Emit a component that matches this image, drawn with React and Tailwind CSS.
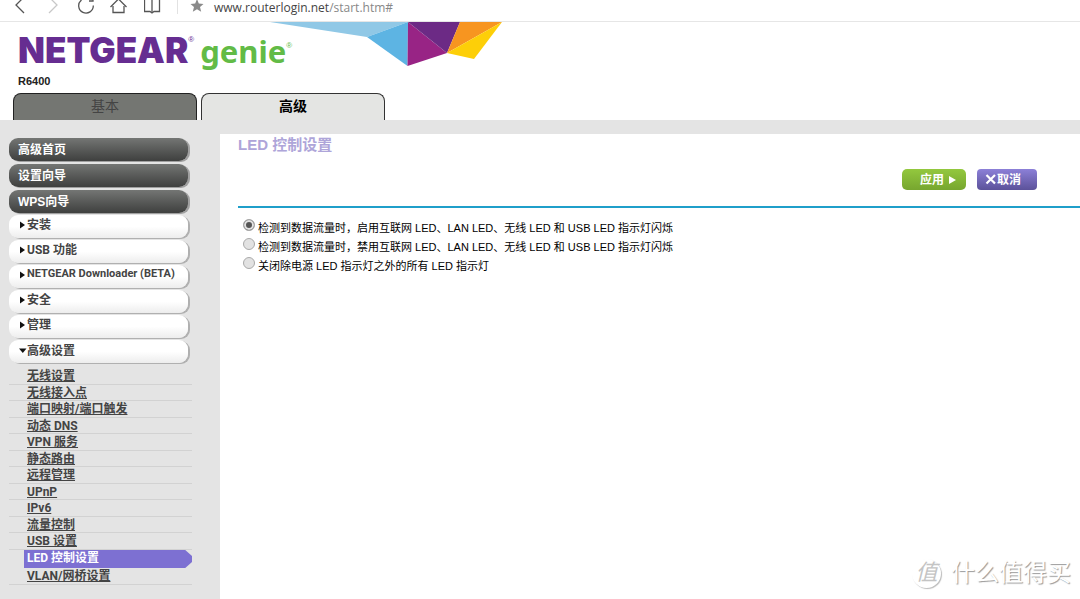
import React, { useState } from 'react';

const wizardItems = ['高级首页', '设置向导', 'WPS向导'];

const groups = [
  { label: '安装' },
  { label: 'USB 功能' },
  { label: 'NETGEAR Downloader (BETA)', small: true },
  { label: '安全' },
  { label: '管理' },
  { label: '高级设置', open: true }
];

const advancedItems = [
  '无线设置',
  '无线接入点',
  '端口映射/端口触发',
  '动态 DNS',
  'VPN 服务',
  '静态路由',
  '远程管理',
  'UPnP',
  'IPv6',
  '流量控制',
  'USB 设置',
  'LED 控制设置',
  'VLAN/网桥设置'
];

const ledOptions = [
  '检测到数据流量时，启用互联网 LED、LAN LED、无线 LED 和 USB LED 指示灯闪烁',
  '检测到数据流量时，禁用互联网 LED、LAN LED、无线 LED 和 USB LED 指示灯闪烁',
  '关闭除电源 LED 指示灯之外的所有 LED 指示灯'
];

const BrowserBar = () => (
  <div className="flex h-[22px] items-start border-b border-[#e6e6e6] bg-white pl-3 text-[#555]">
    <button type="button" aria-label="Back" className="mr-4">
      <svg width="16" height="16" viewBox="0 0 16 16" fill="none" stroke="currentColor" strokeWidth="1.3">
        <path d="M12 -3L4 5L12 13" />
      </svg>
    </button>
    <button type="button" aria-label="Forward" className="mr-4 text-[#c8c8c8]">
      <svg width="16" height="16" viewBox="0 0 16 16" fill="none" stroke="currentColor" strokeWidth="1.3">
        <path d="M5 -3L13 5L5 13" />
      </svg>
    </button>
    <button type="button" aria-label="Reload" className="mr-[14px]">
      <svg width="20" height="16" viewBox="0 0 20 16" fill="none" stroke="currentColor" strokeWidth="1.3">
        <path d="M5.500 0A7.300 7.300 0 1 0 17.300 5.500" />
        <path d="M13 1H17V-3" />
      </svg>
    </button>
    <button type="button" aria-label="Home" className="mr-4">
      <svg width="18" height="16" viewBox="0 0 18 16" fill="none" stroke="currentColor" strokeWidth="1.3">
        <path d="M0.500 7L8.500 -1L16.500 7" />
        <path d="M3 6V12.500H14V6" />
      </svg>
    </button>
    <button type="button" aria-label="Favorites" className="mr-4">
      <svg width="17" height="16" viewBox="0 0 17 16" fill="none" stroke="currentColor" strokeWidth="1.3">
        <path d="M0.500 -2V11.500H6L8 13L10 11.500H15.500V-2" />
        <path d="M8 0V12" />
      </svg>
    </button>
    <div className="mr-3 h-[14px] w-px bg-[#e2e2e2]" />
    <svg width="16" height="14" viewBox="0 0 16 14" fill="#8a8a8a" className="mr-2">
      <path d="M7 -1L8.800 3.500L13.500 3.900L10 7L11.200 11.800L7 9.200L2.800 11.800L4 7L0.500 3.900L5.200 3.500Z" />
    </svg>
    <p className="font-['Open_Sans',sans-serif] text-xs leading-4 text-[#444]">
      www.routerlogin.net<span className="text-[#888]">/start.htm#</span>
    </p>
  </div>
);

const Banner = () => (
  <svg width="232" height="44" viewBox="0 0 232 44" className="absolute left-[270px] top-0">
    <polygon points="0,0 138,0 97,15" fill="#90c8e6" />
    <polygon points="138,0 97,15 137.500,44" fill="#5db4e3" />
    <polygon points="138,0 177,31 137.500,44" fill="#982485" />
    <polygon points="138,0 190,0 177,31" fill="#6c2a85" />
    <polygon points="190,0 232,0 177,31" fill="#f79520" />
    <polygon points="232,0 177,31 204,37" fill="#fdcf08" />
  </svg>
);

const Header = () => (
  <header className="relative bg-white pl-[18px]">
    <Banner />
    <div className="relative flex h-[51px] items-baseline pt-2 leading-[40px]">
      <span className="font-['Inter',sans-serif] text-[35px] font-black text-[#662d91]">NETGEAR</span>
      <sup className="self-start text-[8px] leading-7 text-[#662d91]">®</sup>
      <span className="ml-[6px] font-['Noto_Sans',sans-serif] text-[31px] font-bold text-[#62bb46]">genie</span>
      <sup className="self-start text-[8px] leading-10 text-[#62bb46]">®</sup>
    </div>
    <p className="h-5 text-[11px] font-bold leading-4 text-[#222]">R6400</p>
    <nav className="-ml-[5px] flex gap-1 text-sm font-bold leading-6">
      <button type="button" className="h-[27px] w-[184px] rounded-t-lg border border-b-0 border-[#222] bg-[#747672] pb-[2px] font-normal text-[#444]">
        基本
      </button>
      <button type="button" className="h-[27px] w-[184px] rounded-t-lg border border-b-0 border-[#333] bg-[#e4e5e3] pb-[2px] text-black">
        高级
      </button>
    </nav>
  </header>
);

const Sidebar = ({ active, onSelect }) => (
  <aside className="w-[220px] shrink-0 pl-[9px] pt-[18px] text-xs font-bold text-[#444]">
    <div className="flex flex-col gap-[3px]">
      {wizardItems.map((item) => (
        <button
          key={item}
          type="button"
          className="h-[23px] w-[179px] rounded-[9px] bg-linear-to-b from-[#747674] to-[#3f403f] pl-[9px] text-left text-white shadow-[2px_1px_0_#a0a0a0]"
        >
          {item}
        </button>
      ))}
    </div>
    <div className="mt-[2px] flex flex-col gap-[2px]">
      {groups.map((group) => (
        <button
          key={group.label}
          type="button"
          className={`flex h-[23px] w-[179px] items-center rounded-[9px] bg-linear-to-b from-white from-50% to-[#ededed] pl-[10px] shadow-[2px_1px_0_#b0b0b0] ${
            group.open ? 'pb-[2px]' : 'pb-1'
          }`}
        >
          <svg width="8" height="8" viewBox="0 0 8 8" fill="#111">
            {group.open ? <path d="M0 1.500H7.500L3.800 6Z" /> : <path d="M1 0.500L6 4L1 7.500Z" />}
          </svg>
          <span className={`font-['Roboto','Noto_Sans_CJK_SC',sans-serif] ${group.small ? 'text-[11px]' : 'text-xs'}`}>
            {group.label}
          </span>
        </button>
      ))}
    </div>
    <ul className="w-[183px] pt-[5px] font-['Roboto','Noto_Sans_CJK_SC',sans-serif]">
      {advancedItems.map((item) =>
        item === active ? (
          <li key={item} className="pl-[15px]">
            <a
              href="#"
              className="block h-[18px] bg-[#7d70d2] pl-[3px] leading-4 text-white [clip-path:polygon(0_0,96%_0,100%_33%,100%_67%,96%_100%,0_100%)]"
            >
              {item}
            </a>
          </li>
        ) : (
          <li key={item} className="border-b border-[#d2d2d2] pl-[18px] odd:h-[17px] even:h-4">
            <a
              href="#"
              onClick={(e) => {
                e.preventDefault();
                onSelect(item);
              }}
              className="block leading-4 underline"
            >
              {item}
            </a>
          </li>
        )
      )}
    </ul>
  </aside>
);

const Watermark = () => (
  <div className="absolute bottom-[10px] right-[9px] flex items-center gap-[10px] text-white [text-shadow:1px_1px_1px_#999]">
    <span className="flex size-[29px] items-center justify-center rounded-full text-[22px] italic leading-5 text-[#c4c4c4] shadow-[1px_1px_1px_#bbb] [text-shadow:none]">
      值
    </span>
    <span className="text-2xl leading-8">什么值得买</span>
  </div>
);

const App = () => {
  const [active, setActive] = useState('LED 控制设置');
  const [mode, setMode] = useState(0);

  return (
    <div className="relative flex min-h-screen flex-col overflow-hidden bg-[#e4e4e4] font-['Liberation_Sans','Noto_Sans_CJK_SC',sans-serif]">
      <BrowserBar />
      <Header />
      <div className="flex flex-1">
        <Sidebar active={active} onSelect={setActive} />
        <main className="mt-[14px] flex-1 bg-white pl-[18px]">
          <h1 className="text-[15px] font-bold leading-[22px] text-[#aea5d9]">LED 控制设置</h1>
          <div className="mt-[13px] flex justify-end gap-[11px] pr-[43px] text-xs font-bold text-white">
            <button
              type="button"
              className="flex h-[21px] w-16 items-center justify-center gap-1 rounded-[5px] bg-linear-to-b from-[#93c83e] to-[#77a62f] pl-2"
            >
              应用
              <svg width="8" height="8" viewBox="0 0 8 8" fill="currentColor">
                <path d="M1 0L8 4L1 8Z" />
              </svg>
            </button>
            <button
              type="button"
              className="flex h-[21px] w-[60px] items-center rounded-[4px] bg-linear-to-b from-[#8c80d8] to-[#5c529a] pl-2"
            >
              <svg width="12" height="11" viewBox="0 0 12 11" stroke="currentColor" strokeWidth="2.2">
                <path d="M1.500 1L10 9.500M10 1L1.500 9.500" />
              </svg>
              取消
            </button>
          </div>
          <div className="mt-4 h-[2px] bg-[#1f9fca]" />
          <div className="pl-[5px] pt-[10px] text-[11px] text-black">
            {ledOptions.map((option, index) => (
              <label key={option} className="flex h-[19px] items-start gap-[3px] whitespace-nowrap leading-[21px]">
                <input
                  type="radio"
                  name="led"
                  checked={mode === index}
                  onChange={() => setMode(index)}
                  className="mt-px size-3 shrink-0 appearance-none rounded-full border border-[#aaa] bg-[#e2e2e2] checked:bg-[#555] checked:shadow-[inset_0_0_0_2px_#e2e2e2]"
                />
                {option}
              </label>
            ))}
          </div>
        </main>
      </div>
      <Watermark />
    </div>
  );
};

export default App;
